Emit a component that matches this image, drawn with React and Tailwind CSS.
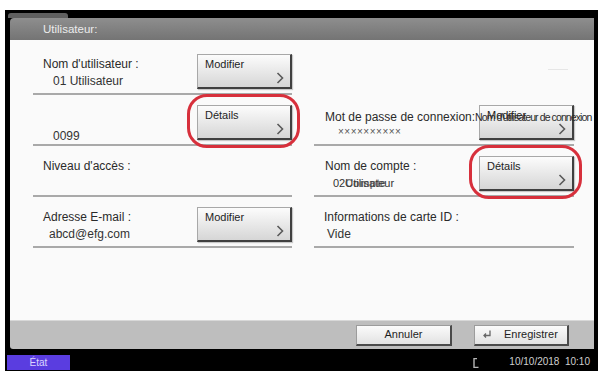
// App.jsx — Utilisateur edit panel (copier/printer touch screen)
import React from 'react'

const font = "font-['Liberation_Sans',Arial,sans-serif]"

function Chevron() {
  return (
    <svg width="8" height="12" viewBox="0 0 8 12" className="self-end">
      <path d="M1.5 1 L6.5 6 L1.5 11" fill="none" stroke="#5a5a5a" strokeWidth="1.6" />
    </svg>
  )
}

function Btn({ label }) {
  return (
    <div className="w-[95px] h-[35px] flex flex-col justify-between pl-[7px] pr-[6px] pt-[2px] pb-[3px] bg-gradient-to-b from-[#fcfcfc] to-[#d6d6d6] border border-[#a8a8a8] border-r-2 border-b-2 border-r-[#404040] border-b-[#404040] shadow-[1px_1px_1px_rgba(0,0,0,0.2)]">
      <span className="text-[11px] leading-[14px] text-[#1e1e1e]">{label}</span>
      <Chevron />
    </div>
  )
}

// annotation ring drawn round a button
function Ringed({ children }) {
  return (
    <div className="relative">
      {children}
      <div className="absolute -left-[10px] -right-[8px] -top-[11px] -bottom-[8px] rounded-[20px] border-[3px] border-[#d7303c]" />
    </div>
  )
}

function Row({ label, value, indent = 'pl-[9px]', valueMt = 'mt-[3px]', button }) {
  return (
    <div className="h-[51px] flex justify-between items-end border-b-2 border-[#a9a9a9]">
      <div className="self-start pt-[13px] pl-[10px] text-[12px] leading-[14px] text-[#2a2a2a] whitespace-nowrap">
        <div className="h-[14px]">{label}</div>
        <div className={`${valueMt} ${indent} text-[#333]`}>{value}</div>
      </div>
      {button && <div className="mb-[4px]">{button}</div>}
    </div>
  )
}

export default function App() {
  return (
    <div className={`w-[601px] h-[371px] bg-white pt-[10px] pl-[5px] pr-[3px] ${font}`}>
      <div className="h-[361px] bg-black flex flex-col">
        {/* tab at top left */}
        <div className="h-[8px] flex items-end">
          <div className="ml-[3px] w-[60px] h-[5px] rounded-t-[3px] bg-[#5f5f5f]" />
        </div>

        {/* title bar */}
        <div className="ml-[5px] mr-[4px] h-[22px] rounded-tl-[4px] bg-gradient-to-b from-[#8e8e8e] to-[#747474] pl-[33px] text-[11.5px] leading-[22px] text-[#ececec]">
          Utilisateur:
        </div>

        {/* content */}
        <div className="ml-[5px] mr-[4px] h-[280px] bg-[#fafafa] pt-[4px] flex overflow-hidden">
          <div className="ml-[23px] w-[259px] flex flex-col">
            <Row label="Nom d'utilisateur :" value="01 Utilisateur" indent="pl-[10px]" button={<Btn label="Modifier" />} />
            <Row label="" value="0099" indent="pl-[10px]" valueMt="mt-[7px]" button={<Ringed><Btn label="Détails" /></Ringed>} />
            <Row label="Niveau d'accès :" value="" />
            <Row label="Adresse E-mail :" value="abcd@efg.com" indent="pl-[6px]" button={<Btn label="Modifier" />} />
          </div>

          <div className="ml-[22px] w-[260px] flex flex-col">
            {/* first row is empty on this side */}
            <div className="h-[51px] flex justify-end pt-[25px] pr-[6px]">
              <div className="w-[20px] h-[1px] bg-[#e6e6e6]" />
            </div>
            <div className="h-[51px] flex justify-between items-end border-b-2 border-[#a9a9a9]">
              <div className="relative z-10 self-start pt-[15px] pl-[11px] text-[12px] leading-[14px] text-[#2a2a2a] whitespace-nowrap w-0">
                <div className="h-[14px]">
                  Mot de passe de connexion:<span className="text-[10.5px] tracking-[-0.9px]">Nom d'utilisateur de connexion :</span>
                </div>
                <div className="mt-[1px] pl-[13px] text-[10px] text-[#555] tracking-[0.5px]">××××××××××</div>
              </div>
              <div className="mb-[4px]"><Btn label="Modifier" /></div>
            </div>
            <div className="h-[51px] flex justify-between items-end border-b-2 border-[#a9a9a9]">
              <div className="self-start pt-[13px] pl-[11px] text-[12px] leading-[14px] text-[#2a2a2a] whitespace-nowrap">
                <div className="h-[14px]">Nom de compte :</div>
                <div className="mt-[3px] pl-[8px] text-[11px] text-[#333] relative">
                  02Utilisateur
                  <span className="absolute left-[20px] top-0 font-bold text-[#444] opacity-70">Compte</span>
                </div>
              </div>
              <div className="mb-[4px]"><Ringed><Btn label="Détails" /></Ringed></div>
            </div>
            <Row label="Informations de carte ID :" value="Vide" indent="pl-[3px]" />
          </div>
        </div>

        {/* bottom button bar */}
        <div className="ml-[5px] mr-[4px] h-[29px] rounded-bl-[3px] bg-[#bebebe] border-t border-[#d8d8d8] flex items-center justify-end gap-[22px] pr-[25px]">
          <div className="w-[96px] h-[21px] flex items-center justify-center bg-gradient-to-b from-[#fbfbfb] to-[#e2e2e2] border border-[#9c9c9c] border-r-2 border-b-2 border-r-[#4a4a4a] border-b-[#4a4a4a] text-[11px] text-[#1e1e1e]">
            Annuler
          </div>
          <div className="w-[95px] h-[21px] flex items-center gap-[12px] pl-[7px] bg-gradient-to-b from-[#fbfbfb] to-[#e2e2e2] border border-[#9c9c9c] border-r-2 border-b-2 border-r-[#4a4a4a] border-b-[#4a4a4a] text-[11px] text-[#1e1e1e]">
            <svg width="10" height="9" viewBox="0 0 10 9">
              <path d="M8 0.5 V5.5 H2 M4 3.5 L2 5.5 L4 7.5" fill="none" stroke="#666" strokeWidth="1.3" />
            </svg>
            Enregistrer
          </div>
        </div>

        {/* status strip */}
        <div className="flex-1 flex items-end pb-[1px]">
          <div className="ml-[2px] w-[63px] h-[15px] bg-[#5a3de0] text-center text-[10px] leading-[15px] text-[#dcd4ff]">
            État
          </div>
          <div className="ml-auto mb-[2px] mr-[30px]">
            <svg width="6" height="10" viewBox="0 0 6 10">
              <path d="M4 0.5 H1 V9.5 H5.5" fill="none" stroke="#b5b5b5" strokeWidth="1.4" />
            </svg>
          </div>
          <div className="mr-[8px] text-[10px] leading-[16px] text-[#cfcfcf]">10/10/2018&nbsp; 10:10</div>
        </div>
      </div>
    </div>
  )
}
